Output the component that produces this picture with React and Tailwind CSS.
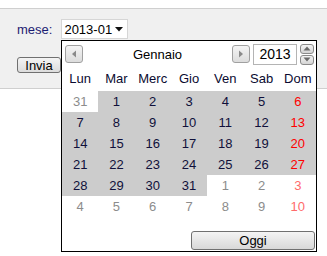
import React from 'react';

const dayNames = ['Lun', 'Mar', 'Merc', 'Gio', 'Ven', 'Sab', 'Dom'];

// 31 dic + gennaio 2013 + inizio febbraio
const cells = [
  { d: 31, other: true },
  ...Array.from({ length: 31 }, (_, i) => ({ d: i + 1, other: false })),
  ...Array.from({ length: 10 }, (_, i) => ({ d: i + 1, other: true })),
];

const weeks = Array.from({ length: 6 }, (_, w) => cells.slice(w * 7, w * 7 + 7));

const NavButton = ({ dir }) => (
  <div className="w-[18px] h-[18px] rounded-[3px] border border-[#a0a0a0] bg-gradient-to-b from-[#f4f4f4] to-[#dcdcdc] flex items-center justify-center">
    <svg width="6" height="8" viewBox="0 0 6 8">
      {dir === 'left' ? (
        <path d="M5 0.5 L1 4 L5 7.5 Z" fill="#8a8a8a" />
      ) : (
        <path d="M1 0.5 L5 4 L1 7.5 Z" fill="#8a8a8a" />
      )}
    </svg>
  </div>
);

const Spinner = () => (
  <div className="flex flex-col gap-px">
    <div className="w-[14px] h-[10px] rounded-[3px] border border-[#8a8a8a] bg-gradient-to-b from-[#f4f4f4] to-[#d4d4d4] flex items-center justify-center">
      <svg width="8" height="5" viewBox="0 0 8 5">
        <path d="M0.5 4.5 L4 0.5 L7.5 4.5 Z" fill="#6a6a6a" />
      </svg>
    </div>
    <div className="w-[14px] h-[10px] rounded-[3px] border border-[#8a8a8a] bg-gradient-to-b from-[#f4f4f4] to-[#d4d4d4] flex items-center justify-center">
      <svg width="8" height="5" viewBox="0 0 8 5">
        <path d="M0.5 0.5 L4 4.5 L7.5 0.5 Z" fill="#6a6a6a" />
      </svg>
    </div>
  </div>
);

const dayColor = (cell, col) => {
  if (cell.other) return col === 6 ? 'text-[#ff6b6b]' : 'text-[#8c8c8c]';
  return col === 6 ? 'text-[#ff0000]' : 'text-[#10103a]';
};

export default function App() {
  return (
    <div
      className="relative w-[327px] h-[256px] bg-white overflow-hidden text-[13px] leading-none"
      style={{ fontFamily: '"Liberation Sans", Arial, sans-serif' }}
    >
      {/* Form panel */}
      <div className="mt-[8px] h-[81px] border-y border-[#cfcfcf] bg-[#f0f0f0] pl-[17px] pt-[10px]">
        <div className="flex items-center gap-[9px]">
          <span className="text-[#1c1c72]">mese:</span>
          <div className="w-[67px] h-[20px] border border-[#d6d6d6] bg-white flex items-center justify-between pl-[2px] pr-[4px] text-black">
            <span>2013-01</span>
            <svg width="8" height="5" viewBox="0 0 8 5">
              <path d="M0 0 L8 0 L4 4.5 Z" fill="#111" />
            </svg>
          </div>
        </div>
        <button className="mt-[18px] w-[44px] h-[16px] rounded-[3px] border border-[#707070] bg-gradient-to-b from-[#f4f4f4] to-[#dcdcdc] text-black text-[13px] leading-none flex items-center justify-center">
          Invia
        </button>
      </div>

      {/* Calendar popup */}
      <div className="absolute left-[61px] top-[40px] w-[256px] h-[212px] border border-black bg-white flex flex-col">
        <div className="h-[25px] flex items-center pl-[3px] pr-[2px] pt-[1px]">
          <NavButton dir="left" />
          <div className="flex-1 text-center text-black">Gennaio</div>
          <NavButton dir="right" />
          <div className="ml-[3px] w-[44px] h-[21px] border border-[#b4b4b4] bg-white flex items-center justify-center text-black text-[14px]">
            2013
          </div>
          <div className="ml-[3px]">
            <Spinner />
          </div>
        </div>

        <div className="h-[25px] grid grid-cols-7 items-center">
          {dayNames.map((n) => (
            <div key={n} className="text-center text-[#0a0a30]">
              {n}
            </div>
          ))}
        </div>

        <div className="flex flex-col">
          {weeks.map((week, w) => (
            <div key={w} className="grid grid-cols-7 h-[21px]">
              {week.map((cell, c) => (
                <div
                  key={c}
                  className={`flex items-center justify-center ${
                    cell.other ? 'bg-white' : 'bg-[#cccccc]'
                  } ${dayColor(cell, c)}`}
                >
                  {cell.d}
                </div>
              ))}
            </div>
          ))}
        </div>

        <div className="flex-1 flex items-end justify-end pr-[1px] pb-[1px]">
          <button className="w-[124px] h-[19px] rounded-[3px] border border-[#707070] bg-gradient-to-b from-[#f4f4f4] to-[#d8d8d8] text-black text-[13px] leading-none flex items-center justify-center">
            Oggi
          </button>
        </div>
      </div>
    </div>
  );
}
